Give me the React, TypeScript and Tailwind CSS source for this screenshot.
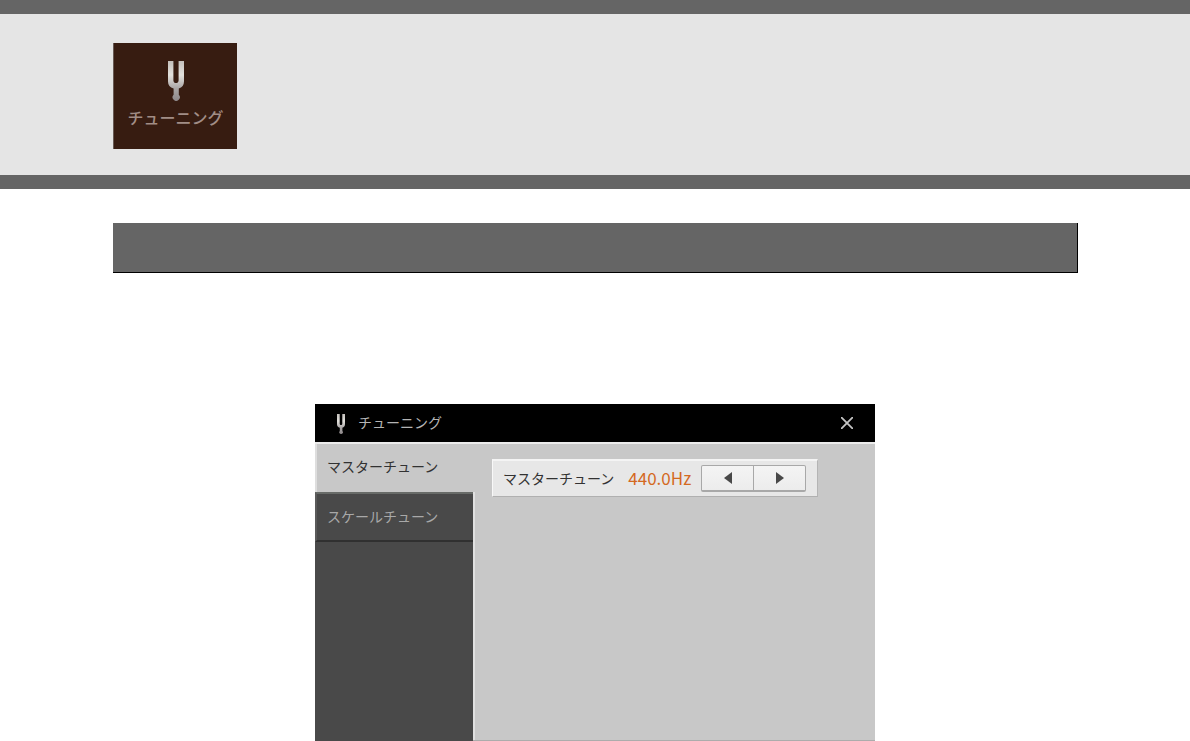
import { useState } from "react";

const tabs = ["マスターチューン", "スケールチューン"];

const TuningFork = ({ className }: { className?: string }) => (
  <svg className={className} viewBox="0 0 16 40" aria-hidden="true">
    <defs>
      <linearGradient id="fork" x1="0" y1="0" x2="0" y2="1">
        <stop offset="0" stopColor="#c4c0bc" />
        <stop offset="0.35" stopColor="#e2e0dc" />
        <stop offset="0.7" stopColor="#a8a4a4" />
        <stop offset="1" stopColor="#8d8789" />
      </linearGradient>
    </defs>
    <path
      fill="url(#fork)"
      d="M0 0h5.4v19.5c0 3.4 5.2 3.4 5.2 0V0H16v20.5c0 3.6-1.9 5.9-5.2 7.1v6.2a3.6 3.6 0 1 1-5.2 0v-6.2C1.9 26.4 0 24.1 0 20.5z"
    />
  </svg>
);

const App = () => {
  const [activeTab, setActiveTab] = useState(0);
  const [pitch, setPitch] = useState(440);

  return (
    <div className="bg-white font-['Noto_Sans_CJK_JP',sans-serif]">
      {/* Banner */}
      <header className="border-y-14 border-[#656565] bg-[#e5e5e5] px-[113px] pt-[29px] pb-[26px]">
        <div className="flex h-[106px] w-[124px] flex-col items-center border-l border-[#685a54] bg-[#371c11] pt-[18px] text-[#a18d86]">
          <TuningFork className="h-10 w-4" />
          <span className="mt-1 text-base leading-6 font-medium">
            チューニング
          </span>
        </div>
      </header>

      <main className="px-[113px] pt-[34px]">
        {/* Section bar */}
        <div className="-mr-px h-[50px] border-r border-b border-black bg-[#656565]"></div>

        {/* Tuning dialog */}
        <section className="mx-auto mt-[131px] w-[560px] text-sm">
          <div className="flex h-[38px] items-center bg-black pr-[18px] pl-[22px] text-[#b4b4b4]">
            <TuningFork className="mt-0.5 h-5 w-2" />
            <h1 className="ml-[13px] grow pb-0.5">チューニング</h1>
            <button type="button" aria-label="閉じる" className="p-1">
              <svg
                className="h-3 w-3"
                viewBox="0 0 12 12"
                stroke="#c4c4c4"
                strokeWidth="1.8"
              >
                <path d="M0 0l12 12M12 0L0 12" />
              </svg>
            </button>
          </div>

          <div className="flex h-[299px] border-t-2 border-[#ececec] bg-[#c8c8c8]">
            <nav className="flex w-[158px] flex-col bg-[#494949]">
              {tabs.map((tab, index) => (
                <button
                  key={tab}
                  type="button"
                  onClick={() => setActiveTab(index)}
                  className={
                    index === activeTab
                      ? "-mr-0.5 h-12 border-l-2 border-l-[#dedede] bg-[#c8c8c8] pb-1 pl-[10px] text-left text-[#323232]"
                      : "h-[50px] border-t-2 border-b-2 border-l-2 border-t-[#686b68] border-b-[#303030] border-l-[#5a5a5a] pb-0.5 pl-[10px] text-left text-[#a8a8a8]"
                  }
                >
                  {tab}
                </button>
              ))}
            </nav>
            <div className="flex grow items-start border-b border-b-[#acacac]">
              <div className="mt-12 w-0.5 self-stretch bg-[#e0e0e0]"></div>
              <div className="mt-[15px] ml-[17px] flex h-[38px] w-[326px] items-center border-t-2 border-r border-b border-l border-t-[#f4f4f4] border-r-[#b4b4b4] border-b-[#b0b0b0] border-l-[#f8f8f8] bg-[#e7e7e7] pr-[11px] pl-[10px]">
                <span className="pb-0.5 text-[#323232]">マスターチューン</span>
                <output className="ml-[14px] grow pb-0.5 text-[17px] leading-6 text-[#d4691f]">
                  {pitch.toFixed(1)}Hz
                </output>
                <div className="flex h-[27px] w-[105px] rounded-xs border border-b-2 border-[#a8a8a8] bg-linear-to-b from-[#f4f4f4] to-[#ececec]">
                  <button
                    type="button"
                    aria-label="下げる"
                    onClick={() => setPitch(pitch - 0.1)}
                    className="flex grow items-center justify-center border-r border-[#a8a8a8]"
                  >
                    <svg className="h-3 w-2" viewBox="0 0 8 12" fill="#484848">
                      <path d="M8 0v12L0 6z" />
                    </svg>
                  </button>
                  <button
                    type="button"
                    aria-label="上げる"
                    onClick={() => setPitch(pitch + 0.1)}
                    className="flex grow items-center justify-center"
                  >
                    <svg className="h-3 w-2" viewBox="0 0 8 12" fill="#484848">
                      <path d="M0 0v12l8-6z" />
                    </svg>
                  </button>
                </div>
              </div>
            </div>
          </div>
        </section>
      </main>
    </div>
  );
};

export default App;
